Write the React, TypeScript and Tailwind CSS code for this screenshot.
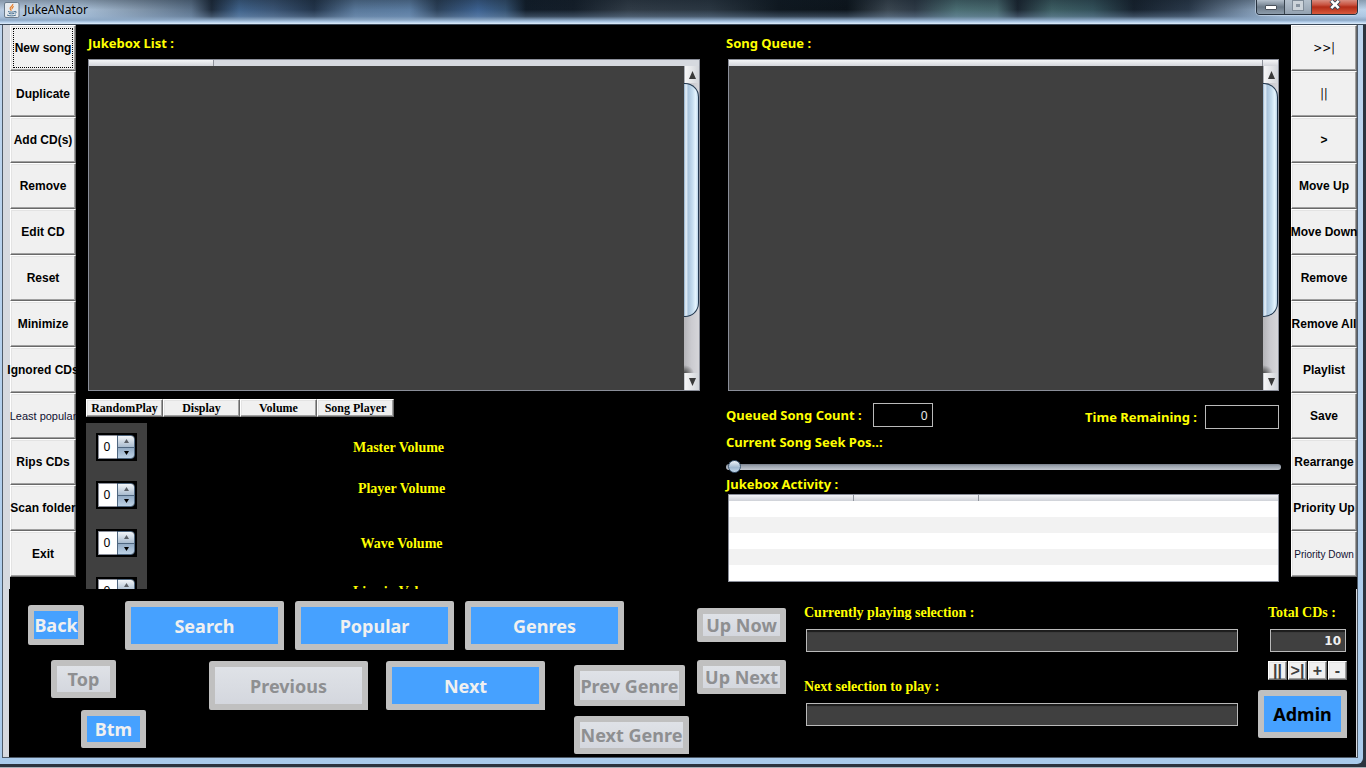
import React from "react";

const leftActions = [
  "New song", "Duplicate", "Add CD(s)", "Remove", "Edit CD", "Reset",
  "Minimize", "Ignored CDs", "Least popular", "Rips CDs", "Scan folder", "Exit",
];
const rightActions = [
  ">>|", "||", ">", "Move Up", "Move Down", "Remove",
  "Remove All", "Playlist", "Save", "Rearrange", "Priority Up", "Priority Down",
];

const faces: Record<string, string> = {
  "Least popular": "font-['Liberation_Sans',sans-serif] text-[11px] font-normal text-[#101030]",
  "Priority Down": "font-['Liberation_Sans',sans-serif] text-[10px] font-normal text-[#101030]",
  ">>|": "font-['DejaVu_Sans_Condensed','DejaVu_Sans',sans-serif] text-xs font-normal text-black",
  "||": "font-['DejaVu_Sans_Condensed','DejaVu_Sans',sans-serif] text-xs font-normal text-black",
};
const boldFace = "font-['Liberation_Sans',sans-serif] text-xs font-bold text-black";

const sans = "font-['Noto_Sans',sans-serif]";
const serif = "font-['Liberation_Serif',serif]";
const label = "font-['Noto_Sans',sans-serif] text-[13px] leading-4 font-bold text-[#ffff00] whitespace-nowrap";
const serifLabel = "font-['Liberation_Serif',serif] text-sm leading-4 font-bold text-[#ffff00] whitespace-nowrap";
const bevel =
  "border border-t-white border-l-white border-r-[#696969] border-b-[#696969] bg-[#f0f0f0] shadow-[inset_-1px_-1px_0_#a0a0a0,inset_1px_1px_0_#e3e3e3]";

function SideButton({ text, focused }: { text: string; focused?: boolean }) {
  return (
    <button
      className={`flex h-[46px] w-full items-center justify-center p-[2px] whitespace-nowrap ${bevel} ${faces[text] ?? boldFace}`}
    >
      <span
        className={`flex h-full w-full items-center justify-center ${
          focused ? "border border-dotted border-black" : ""
        }`}
      >
        {text}
      </span>
    </button>
  );
}

function ScrollBar({ name }: { name: string }) {
  return (
    <div className="flex w-[15px] shrink-0 flex-col bg-gradient-to-r from-[#b4b4b8] via-[#cbcbd0] to-[#d6d6da]" role="group" aria-label={name}>
      <button aria-label="Scroll up" className="flex h-[17px] items-center justify-center border-l border-[#a9adb5] bg-gradient-to-r from-[#f6f6f7] to-[#d2d5da]">
        <svg width="7" height="8" viewBox="0 0 7 8" aria-hidden="true">
          <path d="M3.500 0 7 8H0z" fill="#3a3a3a" />
        </svg>
      </button>
      <div className="flex-[234_1_0%] rounded-r-[14px] border border-l-0 border-[#22384f] bg-[linear-gradient(90deg,#8aa9c6_0%,#eaf3fb_14%,#a9c3db_30%,#c4dcee_60%,#e6f6ff_85%,#b9d2e6_100%)]" />
      <div className="flex-[56_1_0%] bg-[radial-gradient(ellipse_10px_8px_at_0_100%,#4a4a4a,transparent)]" />
      <button aria-label="Scroll down" className="flex h-[17px] items-center justify-center border-l border-[#c9ccd2] bg-gradient-to-r from-[#f6f6f7] to-[#d2d5da]">
        <svg width="7" height="8" viewBox="0 0 7 8" aria-hidden="true">
          <path d="M0 0h7L3.500 8z" fill="#3a3a3a" />
        </svg>
      </button>
    </div>
  );
}

function ListBox({ name, split }: { name: string; split: boolean }) {
  return (
    <div className="flex h-[332px] flex-col border border-[#8a8e99] bg-[#404040]">
      <div className="flex h-1.5 shrink-0 bg-[#d6d9df]">
        {split ? (
          <div className="w-[125px] border-r border-[#8f939b] bg-gradient-to-b from-[#f4f5f7] to-[#d3d5da]" />
        ) : (
          <>
            <div className="flex-1 bg-gradient-to-b from-[#f4f5f7] to-[#d3d5da]" />
            <div className="w-4 border-l border-[#8f939b] bg-gradient-to-b from-[#f4f5f7] to-[#d3d5da]" />
          </>
        )}
      </div>
      <div className="flex flex-1 justify-end">
        <ScrollBar name={name} />
      </div>
    </div>
  );
}

function Spinner({ name }: { name: string }) {
  return (
    <div className="flex h-7 w-[41px] shrink-0 bg-black p-[2px]">
      <input
        aria-label={name}
        defaultValue="0"
        className={`w-[19px] min-w-0 border border-r-0 border-[#8a8e99] bg-white pr-[2px] text-center text-xs text-black outline-none ${sans}`}
      />
      <div className="flex w-[18px] flex-col overflow-hidden rounded-r-[4px] border border-[#4f6780]">
        <button aria-label={`${name} up`} className="flex flex-1 items-center justify-center border-b border-[#4f6780] bg-gradient-to-b from-[#f2f5f8] to-[#a9bccf]">
          <svg width="5" height="4" viewBox="0 0 5 4" aria-hidden="true"><path d="M2.500 0 5 4H0z" fill="#5b6168" /></svg>
        </button>
        <button aria-label={`${name} down`} className="flex flex-1 items-center justify-center bg-gradient-to-b from-[#93abc4] to-[#bdd2e6]">
          <svg width="5" height="4" viewBox="0 0 5 4" aria-hidden="true"><path d="M0 0h5L2.500 4z" fill="#000" /></svg>
        </button>
      </div>
    </div>
  );
}

function BigButton({ text, size, kind = "blue" }: { text: string; size: string; kind?: "blue" | "off" | "admin" }) {
  const look =
    kind === "off"
      ? "bg-gradient-to-b from-[#dfe2e7] to-[#d4d7de] text-[#8e8f91]"
      : kind === "admin"
      ? "bg-[#46a1ff] text-black"
      : "bg-[#46a1ff] text-[#f0f0f0]";
  return (
    <button
      disabled={kind === "off"}
      className={`flex shrink-0 items-center justify-center rounded-tl-[3px] rounded-tr-[2px] rounded-bl-[2px] border-[6px] border-[#c0c0c0] text-lg leading-6 font-bold whitespace-nowrap ${sans} ${look} ${size}`}
    >
      {text}
    </button>
  );
}

function TitleBar() {
  return (
    <header className="relative flex h-[25px] shrink-0 items-start justify-between border-b border-[#3c4a5a] bg-[linear-gradient(90deg,#b9cce2_0%,#a9bfd6_6%,#8397ac_10%,#5b7189_14%,#1d2a3a_15.500%,#3f628a_17.500%,#3a5474_20%,#22344a_23%,#587799_26%,#5a7ba0_30%,#2b4058_32%,#3c6190_35%,#33506f_37%,#111c28_38.500%,#141e29_42%,#303b46_46%,#2a3641_52%,#0f1820_57%,#0c141b_62%,#3a4650_65%,#2d3945_67%,#4a6d72_70%,#46666c_73%,#1a2530_74.500%,#3d5e63_77%,#33515a_80%,#16212d_83%,#2a394a_87%,#7389a1_91%,#a9c1da_94%,#bcd4ec_100%)]">
      <div className="pointer-events-none absolute inset-0 bg-[linear-gradient(180deg,rgba(15,25,35,.3)_0%,transparent_40%,rgba(140,170,205,.3)_68%,#8ea9c6_84%,#b4cfec_92%,#e0edf9_100%)]" />
      <div className="relative flex h-5 items-center gap-1 pl-1">
        <svg width="16" height="16" viewBox="0 0 16 16" aria-hidden="true">
          <rect x=".5" y=".5" width="14.500" height="15" rx="1.500" fill="#e6eaee" stroke="#6b7b8b" />
          <path d="M8.800 2C9.500 4 5 5 6.200 7c.4.700 1 1 1 1.800M9.800 4.500C8 5.300 7.600 6 8.400 7.200" fill="none" stroke="#e8781e" strokeWidth="1.200" />
          <path d="M4 9.500c2 .8 5 .8 7 0M4.800 11.300c1.500.7 4 .7 5.400 0M3 13c2.500 1.200 6.500 1.200 9 0M11 9.500c1.800-.4 1.800 1.300-.2 1.800" fill="none" stroke="#4c7595" />
        </svg>
        <h1 className={`text-xs leading-4 text-black ${sans}`}>JukeANator</h1>
      </div>
      <div className="relative mr-2 flex h-[15px] overflow-hidden rounded-b-[4px] border border-t-0 border-[#27323e] shadow-[0_0_0_1px_rgba(220,232,245,.5)]">
        <button aria-label="Minimize window" className="flex w-[28px] items-center justify-center border-r border-[#39444f] bg-gradient-to-b from-[#b5c1cd] via-[#6c7a88] to-[#8d9cab]">
          <span className="h-[5px] w-3 rounded-[1px] border border-[#4b525c] bg-white" />
        </button>
        <button aria-label="Restore window" className="flex w-[27px] items-center justify-center border-r border-[#39444f] bg-gradient-to-b from-[#b5c1cd] to-[#93a1b0]">
          <span className="mt-[-4px] h-[9px] w-[10px] border-[3px] border-[#ccd3da] bg-[#8793a0] outline outline-[#7f8b98]" />
        </button>
        <button aria-label="Close window" className="flex w-[45px] items-center justify-center bg-[linear-gradient(180deg,#d98d80_0%,#c8523f_35%,#b32c17_50%,#d8593c_100%)]">
          <svg className="-mt-[5px]" width="12" height="11" viewBox="0 0 12 11" aria-hidden="true">
            <path d="M2 1.500 10 9.500M10 1.500 2 9.500" stroke="#3d4654" strokeWidth="4.500" />
            <path d="M2.300 1.800 9.700 9.200M9.700 1.800 2.300 9.200" stroke="#fff" strokeWidth="2.600" />
          </svg>
        </button>
      </div>
    </header>
  );
}

function VolumePanel() {
  return (
    <div className="ml-2.5 flex flex-1 flex-col">
      <div className="flex pt-2">
        {["RandomPlay", "Display", "Volume", "Song Player"].map((t) => (
          <button key={t} className={`h-[18px] w-[77px] text-center text-xs leading-4 font-bold whitespace-nowrap text-black ${bevel} ${serif}`}>
            {t}
          </button>
        ))}
      </div>
      <div className="mt-1.5 flex h-[166px] overflow-hidden">
        <div className="flex w-[61px] shrink-0 flex-col items-center gap-5 bg-[#404040] pt-2.5">
          {["Master", "Player", "Wave", "Line in"].map((n) => (
            <Spinner key={n} name={`${n} volume level`} />
          ))}
        </div>
        <div className="flex flex-1 flex-col items-center pt-[17px] pr-[76px]">
          <p className={serifLabel}>Master Volume</p>
          <p className={`mt-[25px] ml-1.5 ${serifLabel}`}>Player Volume</p>
          <p className={`mt-[39px] ml-1.5 ${serifLabel}`}>Wave Volume</p>
          <p className={`mt-8 ${serifLabel}`}>Line in Volume</p>
        </div>
      </div>
    </div>
  );
}

function QueuePanel() {
  return (
    <section className="flex min-w-0 flex-col pr-3">
      <h2 className={`pt-2.5 pb-2 ${label}`}>Song Queue :</h2>
      <div className="ml-0.5"><ListBox name="Song queue scroll" split={false} /></div>
      <div className="mt-3 flex items-start justify-between">
        <div className="flex items-center gap-[11px]">
          <label htmlFor="count" className={label}>Queued Song Count :</label>
          <input id="count" readOnly defaultValue="0" className={`h-6 w-[60px] border border-[#bababa] bg-black pr-1 text-right text-xs text-[#e8e8e8] ${sans}`} />
        </div>
        <div className="mt-0.5 flex items-center gap-2">
          <label htmlFor="remaining" className={label}>Time Remaining :</label>
          <input id="remaining" readOnly className="h-6 w-[74px] border border-[#bababa] bg-black" />
        </div>
      </div>
      <label htmlFor="seek" className={`mt-[5px] ${label}`}>Current Song Seek Pos..:</label>
      <input
        id="seek"
        type="range"
        defaultValue="0"
        className="mt-2.5 -mr-0.5 h-3.5 appearance-none bg-transparent [&::-webkit-slider-runnable-track]:h-1.5 [&::-webkit-slider-runnable-track]:rounded-full [&::-webkit-slider-runnable-track]:bg-[linear-gradient(180deg,#787f8a,#9aa2ad_30%,#c3c8d0)] [&::-webkit-slider-thumb]:-mt-[4px] [&::-webkit-slider-thumb]:ml-0.5 [&::-webkit-slider-thumb]:h-[13px] [&::-webkit-slider-thumb]:w-[13px] [&::-webkit-slider-thumb]:appearance-none [&::-webkit-slider-thumb]:rounded-full [&::-webkit-slider-thumb]:border [&::-webkit-slider-thumb]:border-[#3f5a75] [&::-webkit-slider-thumb]:bg-[linear-gradient(180deg,#eef3f8,#9fb8d0_60%,#c3d9ec)]"
      />
      <h2 className={`mt-0.5 ${label}`}>Jukebox Activity :</h2>
      <div className="mt-0.5 ml-0.5 border border-[#8a8e99] bg-white">
        <table className="w-full table-fixed border-separate border-spacing-0" aria-label="Jukebox activity">
          <colgroup><col className="w-[125px]" /><col className="w-[125px]" /><col /></colgroup>
          <thead>
            <tr className="h-1.5 bg-gradient-to-b from-[#f4f5f7] to-[#cfd2d8]">
              <th className="border-r border-[#8f939b] p-0" />
              <th className="border-r border-[#8f939b] p-0" />
              <th className="p-0" />
            </tr>
          </thead>
          <tbody>
            {[0, 1, 2, 3, 4].map((r) => (
              <tr key={r} className="h-4 odd:bg-white even:bg-[#f2f2f2]">
                <td className="p-0" /><td className="p-0" /><td className="p-0" />
              </tr>
            ))}
          </tbody>
        </table>
      </div>
    </section>
  );
}

const field =
  "border border-[#bababa] bg-[#404040] shadow-[inset_0_2px_1px_#1c1c1c] px-1 font-['DejaVu_Sans',sans-serif] text-xs font-bold text-[#f0f0f0]";

function TransportPanel() {
  return (
    <footer className="ml-[-1px] flex flex-1 border-r border-[#d6d9df] bg-black">
      <div className="flex w-[680px] shrink-0 flex-col">
        <div className="flex items-start pt-3 pl-[19px]">
          <div className="mt-1 mr-[41px]"><BigButton text="Back" size="h-10 w-14" /></div>
          <div className="flex gap-[11px]">
            <BigButton text="Search" size="h-[49px] w-[159px]" />
            <BigButton text="Popular" size="h-[49px] w-[159px]" />
            <BigButton text="Genres" size="h-[49px] w-[159px]" />
          </div>
        </div>
        <div className="mt-[10px] flex items-start pl-[42px]">
          <BigButton text="Top" kind="off" size="h-[38px] w-[65px]" />
          <div className="ml-[93px] flex items-start gap-[18px] pt-px">
            <BigButton text="Previous" kind="off" size="h-[49px] w-[159px]" />
            <BigButton text="Next" size="h-[49px] w-[159px]" />
          </div>
          <div className="ml-[29px] pt-[5px]"><BigButton text="Prev Genre" kind="off" size="h-[41px] w-[111px]" /></div>
        </div>
        <div className="flex items-start justify-between pl-[72px]">
          <BigButton text="Btm" size="h-[38px] w-[65px]" />
          <div className="pt-1.5"><BigButton text="Next Genre" kind="off" size="h-[38px] w-[115px]" /></div>
        </div>
      </div>
      <div className="ml-2 flex shrink-0 flex-col gap-[18px] pt-[19px]">
        <BigButton text="Up Now" kind="off" size="h-[34px] w-[89px]" />
        <BigButton text="Up Next" kind="off" size="h-[34px] w-[89px]" />
      </div>
      <div className="ml-[18px] flex min-w-0 flex-1 flex-col pt-4">
        <label htmlFor="current" className={serifLabel}>Currently playing selection :</label>
        <input id="current" readOnly className={`mt-2 ml-0.5 h-[23px] ${field}`} />
        <label htmlFor="upcoming" className={`mt-[27px] ${serifLabel}`}>Next selection to play :</label>
        <input id="upcoming" readOnly className={`mt-2 ml-0.5 h-[23px] ${field}`} />
      </div>
      <div className="mr-[9px] ml-5 flex w-[89px] shrink-0 flex-col items-end pt-4">
        <label htmlFor="total" className={`self-start pl-2.5 ${serifLabel}`}>Total CDs :</label>
        <input id="total" readOnly defaultValue="10" className={`mt-2 mr-px h-[23px] w-[76px] text-right ${field}`} />
        <div className="mt-[9px] flex gap-px">
          {["||", ">|", "+", "-"].map((t) => (
            <button key={t} className={`flex h-[19px] w-[19px] items-center justify-center font-['Liberation_Sans',sans-serif] text-base leading-4 font-bold text-[#404040] ${bevel}`}>
              {t}
            </button>
          ))}
        </div>
        <div className="mt-2.5"><BigButton text="Admin" kind="admin" size="h-12 w-[89px]" /></div>
      </div>
    </footer>
  );
}

export default function App() {
  return (
    <div className="flex min-h-screen flex-col bg-[#2c343f]">
      <TitleBar />
      <div className="mr-[3px] flex flex-1 flex-col rounded-br-[6px] bg-gradient-to-b from-[#bed5ee] to-[#aacbec] pr-[5px] pb-1.5">
        <div className="ml-[2px] flex flex-1 flex-col border-x border-b border-[#4e5a68] bg-[#d6d9df] pl-[7px]">
          <main className="flex min-w-0 bg-black">
            <nav aria-label="Library actions" className="w-[66px] shrink-0">
              {leftActions.map((t, i) => <SideButton key={t} text={t} focused={i === 0} />)}
            </nav>
            <div className="grid min-w-0 flex-1 grid-cols-[minmax(0,650fr)_minmax(0,565fr)]">
              <section className="flex min-w-0 flex-col">
                <h2 className={`pt-2.5 pb-2 pl-3 ${label}`}>Jukebox List :</h2>
                <div className="mr-[26px] ml-3"><ListBox name="Jukebox list scroll" split /></div>
                <VolumePanel />
              </section>
              <QueuePanel />
            </div>
            <nav aria-label="Queue actions" className="w-[66px] shrink-0">
              {rightActions.map((t) => <SideButton key={t} text={t} />)}
            </nav>
          </main>
          <TransportPanel />
        </div>
      </div>
      <div className="h-1 shrink-0 bg-[linear-gradient(180deg,#2c343f_0_3px,#aab0b8_3px)]" />
    </div>
  );
}
